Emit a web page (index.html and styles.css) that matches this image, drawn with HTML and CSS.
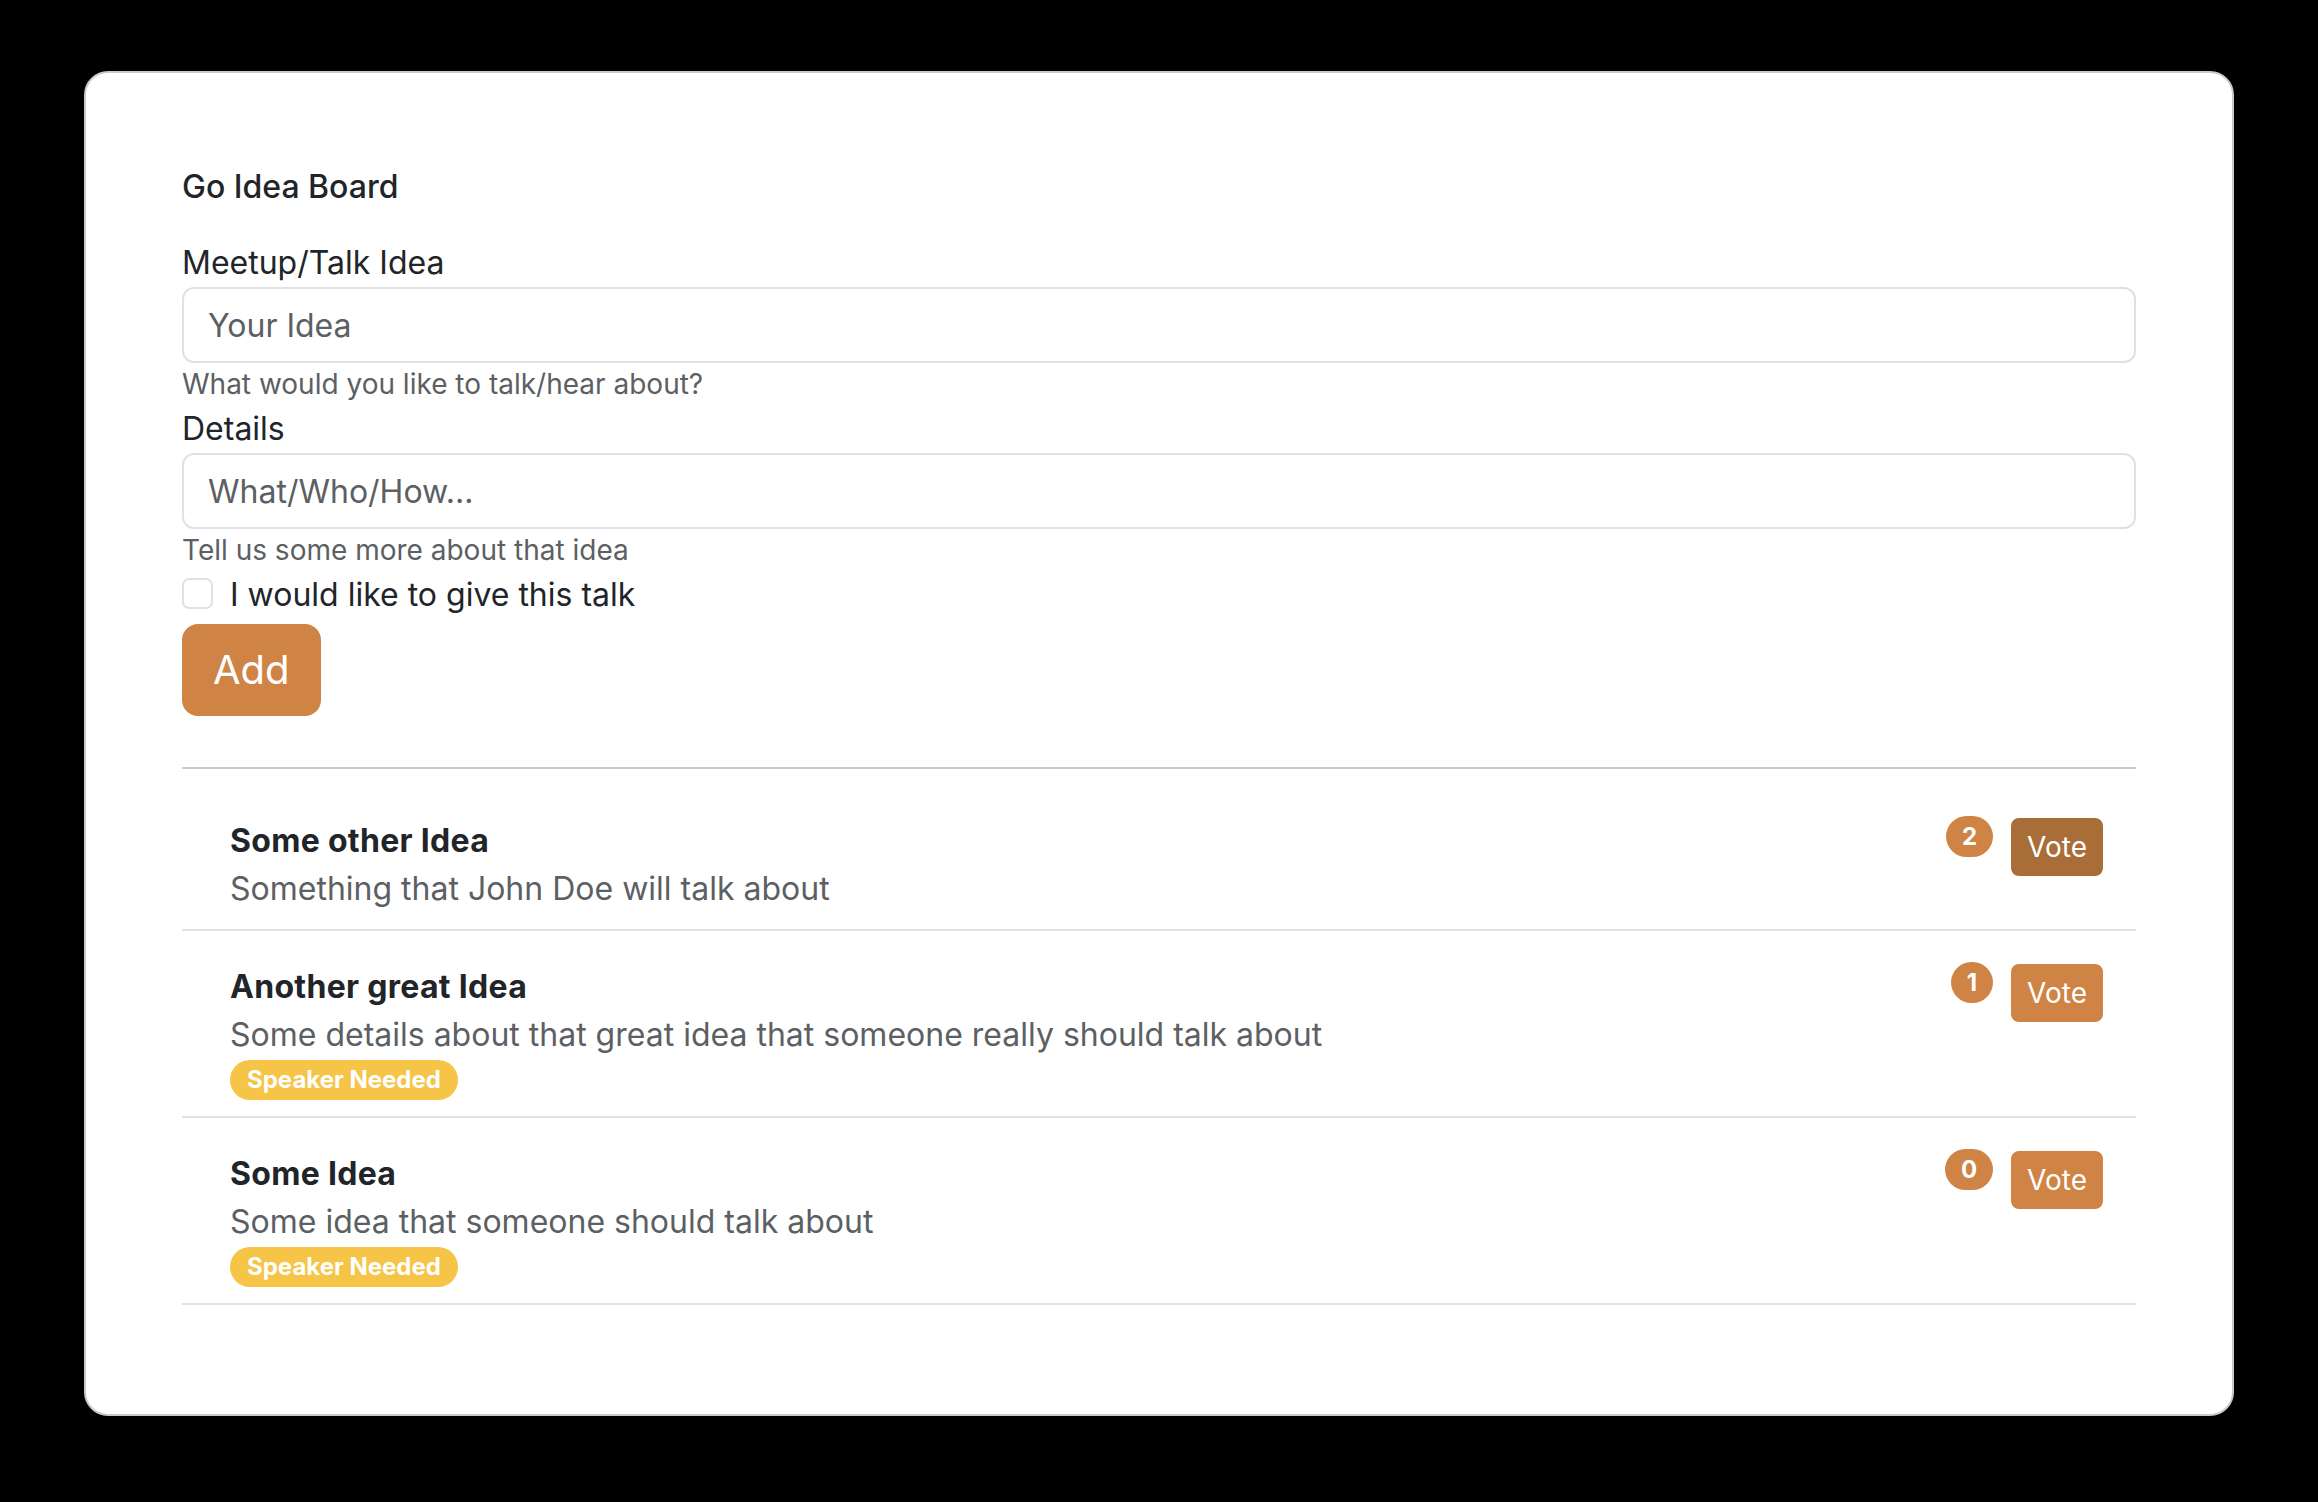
FILE: index.html
```html
<!DOCTYPE html>
<html lang="en">
<head>
<meta charset="utf-8">
<title>Go Idea Board</title>
<link rel="stylesheet" href="styles.css">
</head>
<body>
<div class="window">
  <div class="brand">Go Idea Board</div>
  <form class="idea-form">
    <label class="form-label">Meetup/Talk Idea</label>
    <input class="form-control" type="text" placeholder="Your Idea">
    <div class="form-text">What would you like to talk/hear about?</div>
    <label class="form-label">Details</label>
    <input class="form-control" type="text" placeholder="What/Who/How...">
    <div class="form-text">Tell us some more about that idea</div>
    <div class="form-check">
      <span class="check-box"></span>
      <span class="check-label">I would like to give this talk</span>
    </div>
    <button type="button" class="btn-add">Add</button>
  </form>
  <div class="divider"></div>
  <ul class="ideas">
    <li class="idea">
      <div class="idea-body">
        <div class="idea-title">Some other Idea</div>
        <div class="idea-desc">Something that John Doe will talk about</div>
      </div>
      <div class="idea-actions">
        <span class="count">2</span>
        <button type="button" class="vote vote-active">Vote</button>
      </div>
    </li>
    <li class="idea">
      <div class="idea-body">
        <div class="idea-title">Another great Idea</div>
        <div class="idea-desc">Some details about that great idea that someone really should talk about</div>
        <span class="speaker">Speaker Needed</span>
      </div>
      <div class="idea-actions">
        <span class="count">1</span>
        <button type="button" class="vote">Vote</button>
      </div>
    </li>
    <li class="idea">
      <div class="idea-body">
        <div class="idea-title">Some Idea</div>
        <div class="idea-desc">Some idea that someone should talk about</div>
        <span class="speaker">Speaker Needed</span>
      </div>
      <div class="idea-actions">
        <span class="count">0</span>
        <button type="button" class="vote">Vote</button>
      </div>
    </li>
  </ul>
</div>
</body>
</html>
```
FILE: styles.css
```css
html, body {
  margin: 0;
  padding: 0;
  background: #000;
}

body {
  font-family: Inter, "Noto Sans", "Liberation Sans", sans-serif;
  color: #212529;
  font-size: 32px;
  line-height: 48px;
}

.window {
  box-sizing: border-box;
  margin: 71px 0 0 84px;
  width: 2150px;
  height: 1345px;
  background: #fff;
  border: 2px solid #c9c9c9;
  border-radius: 24px;
  padding: 90px 96px 0 96px;
}

.brand {
  font-size: 32px;
  line-height: 48px;
  font-weight: 500;
  margin-bottom: 28px;
}

.idea-form {
  display: flex;
  flex-direction: column;
  align-items: stretch;
  margin: 0;
}

.form-label {
  display: block;
  font-size: 32px;
  line-height: 48px;
}

.form-control {
  box-sizing: border-box;
  display: block;
  width: 100%;
  height: 76px;
  margin: 0;
  padding: 0 24px;
  border: 2px solid #dee2e6;
  border-radius: 12px;
  font-family: inherit;
  font-size: 32px;
  color: #212529;
  background: #fff;
  outline: none;
}

.form-control::placeholder {
  color: #5c5f63;
  opacity: 1;
}

.form-text {
  font-size: 28px;
  line-height: 42px;
  color: #5c5f63;
}

.form-check {
  display: flex;
  align-items: flex-start;
  margin-bottom: 5px;
}

.check-box {
  box-sizing: border-box;
  width: 31px;
  height: 31px;
  margin-top: 7px;
  margin-right: 17px;
  border: 2px solid #dee2e6;
  border-radius: 7px;
  background: #fff;
  flex: none;
}

.check-label {
  font-size: 32px;
  line-height: 48px;
}

.btn-add {
  align-self: flex-start;
  box-sizing: border-box;
  height: 92px;
  padding: 0 29px;
  border: 2px solid #cf8446;
  border-radius: 16px;
  background: #cf8446;
  color: #fff;
  font-family: inherit;
  font-size: 40px;
  line-height: 60px;
  cursor: pointer;
}

.divider {
  height: 2px;
  background: #c9cacb;
  margin-top: 51px;
  margin-bottom: 16px;
}

.ideas {
  list-style: none;
  margin: 0;
  padding: 0;
}

.idea {
  display: flex;
  justify-content: space-between;
  align-items: flex-start;
  padding: 32px 33px 16px 48px;
  border-bottom: 2px solid #dee2e6;
}

.idea-body {
  display: flex;
  flex-direction: column;
  align-items: flex-start;
}

.idea-title {
  font-weight: 700;
  font-size: 32px;
  line-height: 48px;
  letter-spacing: 0.3px;
}

.idea-desc {
  font-size: 32px;
  line-height: 48px;
  color: #5c5f63;
}

.speaker {
  display: inline-block;
  margin-top: 1px;
  padding: 8px 17px;
  border-radius: 999px;
  background: #f6c446;
  color: #fff;
  font-size: 24px;
  line-height: 24px;
  font-weight: 700;
}

.idea-actions {
  display: flex;
  align-items: flex-start;
  gap: 18px;
}

.count {
  display: inline-block;
  margin-top: -1px;
  padding: 8px 16px;
  border-radius: 999px;
  background: #cf8446;
  color: #fff;
  font-size: 24px;
  line-height: 25px;
  font-weight: 700;
}

.vote {
  box-sizing: border-box;
  height: 58px;
  margin-top: 1px;
  padding: 0 14px;
  border: 2px solid #cf8446;
  border-radius: 8px;
  background: #cf8446;
  color: #fff;
  font-family: inherit;
  font-size: 28px;
  line-height: 42px;
  cursor: pointer;
}

.vote-active {
  background: #a96d38;
  border-color: #a96d38;
}
```
